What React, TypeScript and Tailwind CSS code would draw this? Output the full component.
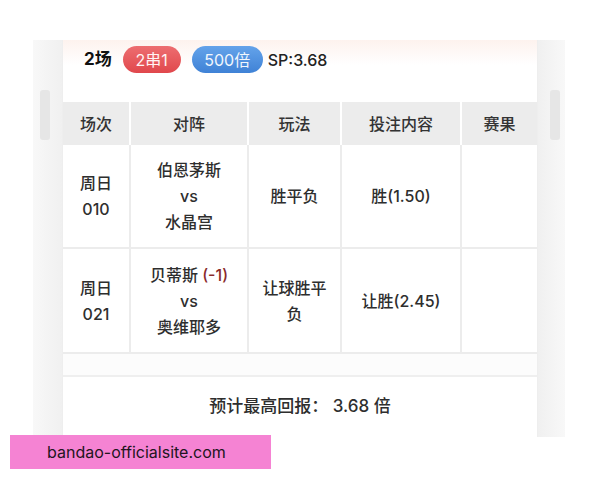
import React from "react";

const font = { fontFamily: 'Inter, "Noto Sans CJK SC", "Noto Sans", sans-serif' };

function Cell({ w, children, last }: { w: string; children: React.ReactNode; last?: boolean }) {
  return (
    <div
      className={`${w} flex flex-col items-center justify-center text-center text-[16px] leading-[26px] font-medium text-[#2e2e2e] ${
        last ? "" : "border-r-2 border-[#ececec]"
      }`}
    >
      {children}
    </div>
  );
}

export default function App() {
  return (
    <div className="relative w-[600px] h-[480px] overflow-hidden bg-white" style={font}>
      <div className="pt-[40px] pl-[33px]">
        <div className="flex w-[532px] h-[397px] bg-[#f3f3f3]">
          {/* left strip */}
          <div className="w-[29px] flex flex-col items-center bg-gradient-to-r from-[#f8f8f8] to-[#f0f0f0]">
            <div className="mt-[50px] w-[10px] h-[50px] rounded-[3px] bg-[#e6e6e6] -ml-[6px]" />
          </div>
          {/* card */}
          <div className="w-[476px] flex flex-col bg-white border-l border-r border-[#eeeeee]">
            <div className="h-[62px] flex items-start pt-[6px] pl-[21px] bg-gradient-to-b from-[#fdf2ee] via-white via-40% to-white">
              <div className="h-[27px] flex items-center text-[17px] font-bold text-[#111]">2场</div>
              <div className="ml-[11px] h-[27px] w-[58px] rounded-full bg-gradient-to-b from-[#ed6d70] to-[#e0474c] flex items-center justify-center text-[16px] text-[#fff3f3]">
                2串1
              </div>
              <div className="ml-[11px] h-[27px] w-[71px] rounded-full bg-gradient-to-b from-[#64a3ea] to-[#3f82d6] flex items-center justify-center text-[16px] text-[#f0f6fd]">
                500倍
              </div>
              <div className="ml-[5px] h-[27px] flex items-center text-[16px] font-medium text-[#222]">SP:3.68</div>
            </div>
            {/* table header */}
            <div className="flex h-[43px] bg-[#ececec] text-[16px] font-medium text-[#333]">
              <div className="w-[68px] flex items-center justify-center border-r-2 border-white">场次</div>
              <div className="w-[118px] flex items-center justify-center border-r-2 border-white">对阵</div>
              <div className="w-[93px] flex items-center justify-center border-r-2 border-white">玩法</div>
              <div className="w-[120px] flex items-center justify-center border-r-2 border-white">投注内容</div>
              <div className="flex-1 flex items-center justify-center">赛果</div>
            </div>
            {/* row 1 */}
            <div className="flex h-[104px] border-b-2 border-[#ececec]">
              <Cell w="w-[68px]">
                <span>周日</span>
                <span>010</span>
              </Cell>
              <Cell w="w-[118px]">
                <span>伯恩茅斯</span>
                <span>vs</span>
                <span>水晶宫</span>
              </Cell>
              <Cell w="w-[93px]">胜平负</Cell>
              <Cell w="w-[120px]">胜(1.50)</Cell>
              <Cell w="flex-1" last>
                {""}
              </Cell>
            </div>
            {/* row 2 */}
            <div className="flex h-[105px] border-b-2 border-[#ececec]">
              <Cell w="w-[68px]">
                <span>周日</span>
                <span>021</span>
              </Cell>
              <Cell w="w-[118px]">
                <span>
                  贝蒂斯 <span className="text-[#8a2b2b]">(-1)</span>
                </span>
                <span>vs</span>
                <span>奥维耶多</span>
              </Cell>
              <Cell w="w-[93px]">
                <span>让球胜平</span>
                <span>负</span>
              </Cell>
              <Cell w="w-[120px]">让胜(2.45)</Cell>
              <Cell w="flex-1" last>
                {""}
              </Cell>
            </div>
            <div className="h-[23px] bg-[#fcfcfc] border-b-2 border-[#efefef]" />
            <div className="flex-1 flex items-center justify-center text-[17px] font-medium text-[#2e2e2e]">
              预计最高回报：&nbsp;3.68 倍
            </div>
          </div>
          {/* right strip */}
          <div className="flex-1 flex flex-col items-center bg-gradient-to-r from-[#f0f0f0] to-[#f8f8f8]">
            <div className="mt-[50px] w-[10px] h-[50px] rounded-[3px] bg-[#e6e6e6] ml-[6px]" />
          </div>
        </div>
      </div>
      <div className="absolute left-[10px] top-[435px] w-[261px] h-[34px] bg-[#f583d3] flex items-center pl-[37px] text-[16px] text-[#221520]">
        bandao-officialsite.com
      </div>
    </div>
  );
}
